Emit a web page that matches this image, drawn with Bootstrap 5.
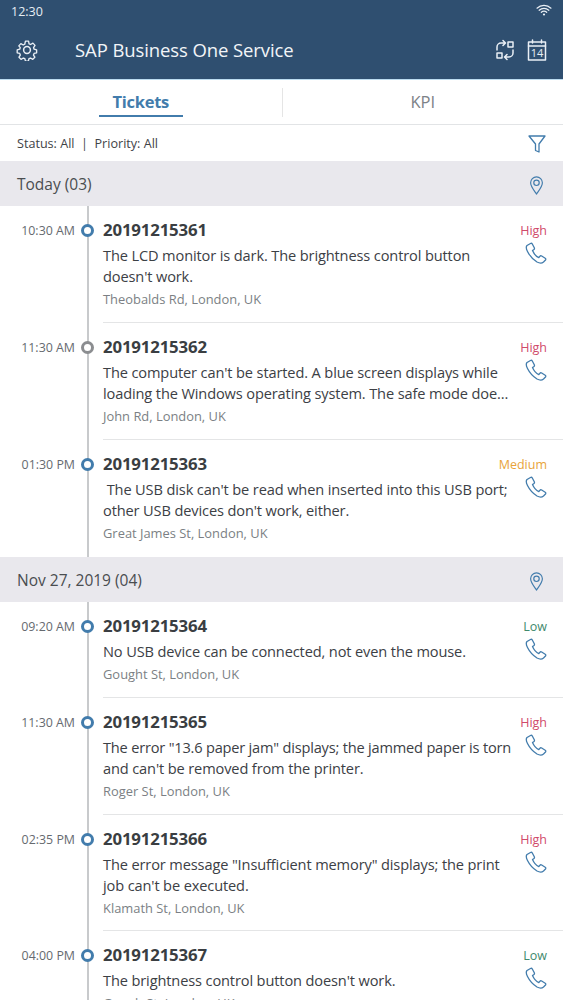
<!DOCTYPE html>
<html lang="en">
<head>
<meta charset="utf-8">
<title>SAP Business One Service</title>
<link href="https://cdn.jsdelivr.net/npm/bootstrap@5.3.0/dist/css/bootstrap.min.css" rel="stylesheet">
<style>
html,body{height:1000px;overflow:hidden}
body{font-family:"Open Sans","Noto Sans","Liberation Sans",sans-serif;color:#32363a;background:#fff}
.shell{width:563px;height:1000px;overflow:hidden}
.appbar{height:80px;background:#2f4f70;color:#fff;border-bottom:1px solid #bcdcf0}
.statusline{height:25px;padding:4px 11px 0 11px;font-size:12.5px;line-height:16px;color:#e6edf3}
.titleline{height:50px;padding:0 16px 0 16px}
.apptitle{font-size:18.5px;margin-left:37px;letter-spacing:-.1px;color:#f2f5f8}
.tabsbar{height:45px;border-bottom:1px solid #e2e4e6;padding-top:8px}
.tabcell{width:50%;height:29px;display:flex;justify-content:center;font-size:16.5px;line-height:28px}
.tabcell+.tabcell{border-left:1px solid #e5e5e5;color:#7d8288}
.tabactive{color:#427cac;font-weight:700;width:84px;height:29px;border-bottom:2px solid #427cac;text-align:center;letter-spacing:-.3px}
.filterbar{height:36px;padding:2px 17px 0;font-size:12.6px;color:#3f4347}
.grouphead{height:45px;background:#e9e8ed;padding:3px 19px 0 17px;font-size:15.5px;color:#4a4d50}
.tick{position:relative;display:flex;height:117px}
.tick.short{height:96px}
.tick.trim{height:116px}
.tick::before{content:"";position:absolute;left:86.500px;top:0;bottom:0;width:2px;background:#c8cacc}
.timecol{width:75px;flex:none;text-align:right;font-size:12.400px;color:#666a6f;padding-top:17px;line-height:16px}
.dotcol{width:28px;flex:none;position:relative}
.dotmark{position:absolute;left:6px;top:18px;width:13px;height:13px;border-radius:50%;border:3.500px solid #427cac;background:#fff}
.dotmark.idle{border-color:#8b8d90}
.tickbody{flex:1;min-width:0;border-bottom:1px solid #e4e5e6;padding:11px 16px 0 0;display:flex;justify-content:space-between}
.nolast{border-bottom:0!important}
.tickmain{width:412px;flex:none}
.ticknum{font-size:16.800px;font-weight:700;line-height:26px;color:#3a3e42;letter-spacing:-.15px}
.tickdesc{font-size:14.600px;line-height:21px;margin-top:2px;color:#3c4045;letter-spacing:-.13px}
.tightline{letter-spacing:-.2px;white-space:nowrap}
.clamped{white-space:nowrap;overflow:hidden;text-overflow:ellipsis;max-width:407px}
.tickplace{font-size:12.900px;line-height:18px;margin-top:3px;color:#7b7f84}
.tickside{width:32px;flex:none;display:flex;flex-direction:column;align-items:flex-end;font-size:12.500px;line-height:16px;padding-top:6px;white-space:nowrap}
.tickside svg{margin-top:3px}
.sev-high{color:#d04a6a}.sev-med{color:#e8a33a}.sev-low{color:#3f8a6d}
.ic{fill:none;stroke:#427cac;stroke-width:1.300;stroke-linecap:round;stroke-linejoin:round}
.icw{fill:none;stroke:#e9eff5;stroke-width:1.500;stroke-linecap:round;stroke-linejoin:round}
.wifiarc{stroke-width:1.200}
.calnum{font-size:11px;fill:#e9eff5;font-family:"Open Sans",sans-serif;font-weight:400}
</style>
</head>
<body>
<div class="shell">
  <header class="appbar">
    <div class="statusline d-flex justify-content-between">
      <span>12:30</span>
      <svg width="16" height="12" viewBox="0 0 16 12"><path class="icw wifiarc" d="M1 4.200a10 10 0 0 1 14 0M3.200 6.300a7 7 0 0 1 9.600 0M5.300 8.300a4 4 0 0 1 5.400 0"/><circle cx="8" cy="10.500" r="1.100" fill="#e9eff5"/></svg>
    </div>
    <div class="titleline d-flex align-items-center">
      <svg width="22" height="22" viewBox="0 0 22 22"><path class="icw" d="M9.300 1.200h3.400l.6 2.900 1.700.8 2.600-1.500 2.300 2.500-1.600 2.500.6 1.700 2.800.8v3.200l-2.800.7-.7 1.800 1.500 2.400-2.300 2.400-2.500-1.500-1.700.7-.7 2.800H9.300l-.7-2.800-1.700-.7-2.500 1.500-2.300-2.400 1.500-2.400-.7-1.800-2.800-.7v-3.200l2.800-.8.600-1.700L1.900 6.400l2.300-2.500 2.600 1.500 1.700-.8z" transform="translate(1.100 1.100) scale(.9)"/><circle class="icw" cx="11" cy="11" r="3.400"/></svg>
      <div class="apptitle flex-grow-1">SAP Business One Service</div>
      <div class="d-flex align-items-center gap-2">
        <svg width="20" height="22" viewBox="0 0 20 22"><rect class="icw" x="13" y="3" width="5" height="5"/><rect class="icw" x="2" y="14" width="5" height="5"/><path class="icw" d="M2 11V8a4 4 0 0 1 4-4h4M8 1.500 10.500 4 8 6.500M18 11v3a4 4 0 0 1-4 4h-4M12 15.500 9.500 18l2.500 2.500"/></svg>
        <svg width="20" height="22" viewBox="0 0 20 22" class="ms-1"><rect class="icw" x="1.500" y="3" width="17" height="18"/><path class="icw" d="M1.500 7h17M5.500 1v3M14.500 1v3"/><text class="calnum" x="10" y="18" text-anchor="middle">14</text></svg>
      </div>
    </div>
  </header>

  <div class="tabsbar d-flex">
    <div class="tabcell"><div class="tabactive">Tickets</div></div>
    <div class="tabcell">KPI</div>
  </div>

  <div class="filterbar d-flex justify-content-between align-items-center">
    <span>Status: All&nbsp; |&nbsp; Priority: All</span>
    <svg width="18" height="20" viewBox="0 0 18 20"><path class="ic" d="M1 2h16l-6 8v8l-3.500-1.500V10z"/></svg>
  </div>

  <div class="grouphead d-flex justify-content-between align-items-center">
    <span>Today (03)</span>
    <svg width="15" height="19" viewBox="0 0 15 21"><path class="ic" d="M7.500 20C4 15 1 11.500 1 7.500a6.500 6.500 0 0 1 13 0c0 4-3 7.500-6.500 12.500z"/><circle class="ic" cx="7.500" cy="7.500" r="3"/></svg>
  </div>

  <div class="tick">
    <div class="timecol">10:30 AM</div><div class="dotcol"><span class="dotmark"></span></div>
    <div class="tickbody">
      <div class="tickmain"><div class="ticknum">20191215361</div><div class="tickdesc">The LCD monitor is dark. The brightness control button<br>doesn't work.</div><div class="tickplace">Theobalds Rd, London, UK</div></div>
      <div class="tickside"><span class="sev-high">High</span><svg width="22" height="22" viewBox="0 0 22 22"><path class="ic" d="M5.500 1.500 2 3.500c-1 1-1 3 .5 6 2 4 5.500 8 9.500 10.500 2.500 1.300 5 1.300 6.500 0l2-2c.5-.7.300-1.400-.3-1.800l-3.500-2.200c-.7-.4-1.400-.3-1.900.3l-1 1.300c-2.500-1-5-4-6.300-7l1.500-1.100c.5-.5.600-1.100.3-1.700L7.300 2c-.4-.7-1.100-.9-1.800-.5z"/></svg></div>
    </div>
  </div>
  <div class="tick">
    <div class="timecol">11:30 AM</div><div class="dotcol"><span class="dotmark idle"></span></div>
    <div class="tickbody">
      <div class="tickmain"><div class="ticknum">20191215362</div><div class="tickdesc">The computer can't be started. A blue screen displays while<br><span class="clamped d-block">loading the Windows operating system. The safe mode does not work either.</span></div><div class="tickplace">John Rd, London, UK</div></div>
      <div class="tickside"><span class="sev-high">High</span><svg width="22" height="22" viewBox="0 0 22 22"><path class="ic" d="M5.500 1.500 2 3.500c-1 1-1 3 .5 6 2 4 5.500 8 9.500 10.500 2.500 1.300 5 1.300 6.500 0l2-2c.5-.7.300-1.400-.3-1.800l-3.500-2.200c-.7-.4-1.400-.3-1.900.3l-1 1.300c-2.500-1-5-4-6.300-7l1.500-1.100c.5-.5.600-1.100.3-1.700L7.300 2c-.4-.7-1.100-.9-1.800-.5z"/></svg></div>
    </div>
  </div>
  <div class="tick">
    <div class="timecol">01:30 PM</div><div class="dotcol"><span class="dotmark"></span></div>
    <div class="tickbody nolast">
      <div class="tickmain"><div class="ticknum">20191215363</div><div class="tickdesc">&nbsp;The USB disk can't be read when inserted into this USB port;<br>other USB devices don't work, either.</div><div class="tickplace">Great James St, London, UK</div></div>
      <div class="tickside"><span class="sev-med">Medium</span><svg width="22" height="22" viewBox="0 0 22 22"><path class="ic" d="M5.500 1.500 2 3.500c-1 1-1 3 .5 6 2 4 5.500 8 9.500 10.500 2.500 1.300 5 1.300 6.500 0l2-2c.5-.7.300-1.400-.3-1.800l-3.500-2.200c-.7-.4-1.400-.3-1.900.3l-1 1.300c-2.500-1-5-4-6.300-7l1.500-1.100c.5-.5.600-1.100.3-1.700L7.300 2c-.4-.7-1.100-.9-1.800-.5z"/></svg></div>
    </div>
  </div>

  <div class="grouphead d-flex justify-content-between align-items-center">
    <span>Nov 27, 2019 (04)</span>
    <svg width="15" height="19" viewBox="0 0 15 21"><path class="ic" d="M7.500 20C4 15 1 11.500 1 7.500a6.500 6.500 0 0 1 13 0c0 4-3 7.500-6.500 12.500z"/><circle class="ic" cx="7.500" cy="7.500" r="3"/></svg>
  </div>

  <div class="tick short">
    <div class="timecol">09:20 AM</div><div class="dotcol"><span class="dotmark"></span></div>
    <div class="tickbody">
      <div class="tickmain"><div class="ticknum">20191215364</div><div class="tickdesc">No USB device can be connected, not even the mouse.</div><div class="tickplace">Gought St, London, UK</div></div>
      <div class="tickside"><span class="sev-low">Low</span><svg width="22" height="22" viewBox="0 0 22 22"><path class="ic" d="M5.500 1.500 2 3.500c-1 1-1 3 .5 6 2 4 5.500 8 9.500 10.500 2.500 1.300 5 1.300 6.500 0l2-2c.5-.7.300-1.400-.3-1.800l-3.500-2.200c-.7-.4-1.400-.3-1.900.3l-1 1.300c-2.500-1-5-4-6.300-7l1.500-1.100c.5-.5.600-1.100.3-1.700L7.300 2c-.4-.7-1.100-.9-1.800-.5z"/></svg></div>
    </div>
  </div>
  <div class="tick">
    <div class="timecol">11:30 AM</div><div class="dotcol"><span class="dotmark"></span></div>
    <div class="tickbody">
      <div class="tickmain"><div class="ticknum">20191215365</div><div class="tickdesc"><span class="tightline">The error "13.6 paper jam" displays; the jammed paper is torn</span><br>and can't be removed from the printer.</div><div class="tickplace">Roger St, London, UK</div></div>
      <div class="tickside"><span class="sev-high">High</span><svg width="22" height="22" viewBox="0 0 22 22"><path class="ic" d="M5.500 1.500 2 3.500c-1 1-1 3 .5 6 2 4 5.500 8 9.500 10.500 2.500 1.300 5 1.300 6.500 0l2-2c.5-.7.300-1.400-.3-1.800l-3.500-2.200c-.7-.4-1.400-.3-1.900.3l-1 1.300c-2.500-1-5-4-6.300-7l1.500-1.100c.5-.5.600-1.100.3-1.700L7.300 2c-.4-.7-1.100-.9-1.800-.5z"/></svg></div>
    </div>
  </div>
  <div class="tick trim">
    <div class="timecol">02:35 PM</div><div class="dotcol"><span class="dotmark"></span></div>
    <div class="tickbody">
      <div class="tickmain"><div class="ticknum">20191215366</div><div class="tickdesc">The error message "Insufficient memory" displays; the print<br>job can't be executed.</div><div class="tickplace">Klamath St, London, UK</div></div>
      <div class="tickside"><span class="sev-high">High</span><svg width="22" height="22" viewBox="0 0 22 22"><path class="ic" d="M5.500 1.500 2 3.500c-1 1-1 3 .5 6 2 4 5.500 8 9.500 10.500 2.500 1.300 5 1.300 6.500 0l2-2c.5-.7.300-1.400-.3-1.800l-3.500-2.200c-.7-.4-1.400-.3-1.900.3l-1 1.300c-2.500-1-5-4-6.300-7l1.500-1.100c.5-.5.600-1.100.3-1.700L7.300 2c-.4-.7-1.100-.9-1.800-.5z"/></svg></div>
    </div>
  </div>
  <div class="tick">
    <div class="timecol">04:00 PM</div><div class="dotcol"><span class="dotmark"></span></div>
    <div class="tickbody nolast">
      <div class="tickmain"><div class="ticknum">20191215367</div><div class="tickdesc">The brightness control button doesn't work.</div><div class="tickplace">Gough St, London, UK</div></div>
      <div class="tickside"><span class="sev-low">Low</span><svg width="22" height="22" viewBox="0 0 22 22"><path class="ic" d="M5.500 1.500 2 3.500c-1 1-1 3 .5 6 2 4 5.500 8 9.500 10.500 2.500 1.300 5 1.300 6.500 0l2-2c.5-.7.300-1.400-.3-1.800l-3.500-2.200c-.7-.4-1.400-.3-1.900.3l-1 1.300c-2.500-1-5-4-6.300-7l1.500-1.100c.5-.5.600-1.100.3-1.700L7.300 2c-.4-.7-1.100-.9-1.800-.5z"/></svg></div>
    </div>
  </div>
</div>
<script src="https://cdn.jsdelivr.net/npm/bootstrap@5.3.0/dist/js/bootstrap.bundle.min.js"></script>
</body>
</html>
